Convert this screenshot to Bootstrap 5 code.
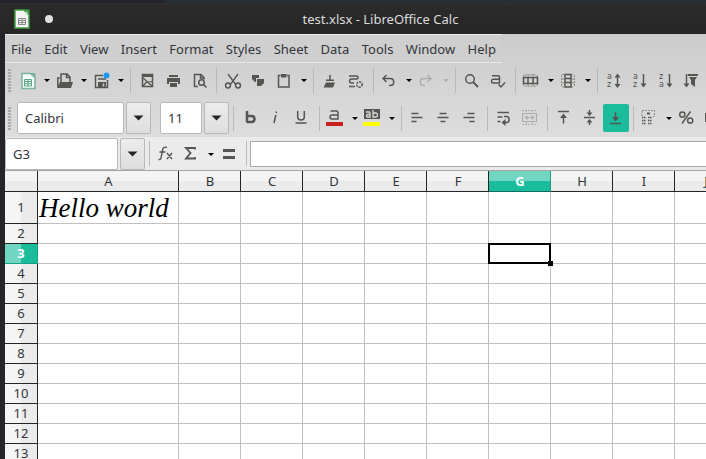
<!DOCTYPE html>
<html lang="en">
<head>
<meta charset="utf-8">
<meta name="viewport" content="width=device-width, initial-scale=1">
<title>test.xlsx - LibreOffice Calc</title>
<link href="https://cdn.jsdelivr.net/npm/bootstrap@5.3.0/dist/css/bootstrap.min.css" rel="stylesheet">
<style>
  body { background: #202228; color: #31363b; font: 13px/20px "Noto Sans", sans-serif; }
  button { color: inherit; }
  .app-shell { background: #242529; padding-left: 5px; }
  .desk-edge { height: 3px; margin-left: -5px; background: linear-gradient(90deg, #20232a 0 165px, #272c37 165px); }
  .title-strip { height: 31px; margin-left: -5px; padding-left: 14px; background: linear-gradient(#303030 0 1px, #2b2b2b 1px, #262626); color: #dcdcdc; border-top-left-radius: 4px; }
  .unsaved-dot { width: 8px; height: 8px; margin-left: 15px; background: #e0e0e0; }
  .side-left { width: 120px; }
  .side-right { width: 79px; }
  .bars { background: linear-gradient(#cbcbcb, #dddddd); }
  .menu-strip { width: 497px; height: 29px; padding: 4px 6px 0; border-top: 1px solid #eee; border-bottom: 1px solid #e8e8e8; background: #cfcfcf; }
  .menu-strip a { color: #31363b; text-decoration: none; }
  .standard-row { height: 34px; }
  .format-row { height: 40px; padding-top: 2px; }
  .grip { width: 3px; height: 23px; margin: 0 4px 0 3px; flex: none; background: repeating-linear-gradient(#a9a9a9 0 2px, transparent 2px 3px); }
  .tool, .drop { padding: 0; border: 0; background: none; display: flex; color: #555652; }
  .tool { width: 26px; flex: none; }
  .drop { width: 11px; flex: none; color: #000; }
  .tool svg, .drop svg { display: block; stroke: currentColor; fill: none; stroke-width: 1.5; }
  .drop svg { stroke: none; fill: currentColor; }
  .tool svg .solid { fill: currentColor; stroke: none; }
  .tool svg text { fill: currentColor; stroke: none; font-family: "DejaVu Sans", sans-serif; }
  .dim { color: #aeaeae; }
  .pressed { height: 28px; align-items: center; border-radius: 2px; background: #1abc9c; }
  .rule { width: 1px; height: 25px; margin: 0 3px 0 4px; background: #b9b9b9; flex: none; }
  .field { height: 32px; border: 1px solid #b8b8b8; border-radius: 2px; background: #fff; color: #31363b; padding: 0 7px; flex: none; }
  .arrow-box { width: 25px; height: 32px; margin-left: 2px; padding: 0; border: 1px solid #b8b8b8; border-radius: 2px; background: linear-gradient(#ececec, #dedede); display: flex; align-items: center; justify-content: center; flex: none; }
  .font-field { width: 107px; margin-left: 2px; }
  .size-field { width: 42px; margin-left: 9px; }
  .name-field { width: 113px; }
  .line-field { height: 26px; border: 1px solid #a9a9a9; border-right: 0; background: #fff; min-width: 0; }
  .formula-row { height: 34px; background: #ebebeb; border-bottom: 1px solid #a5a5a5; }
  .sheet { background: #fff; }
  .grid { table-layout: fixed; width: 732px; border-collapse: separate; border-spacing: 0; background: #fff; }
  .grid td, .grid th { height: 20px; padding: 0; line-height: 19px; border: solid #c0c0c0; border-width: 0 1px 1px 0; white-space: nowrap; }
  .grid th { font-weight: 400; text-align: center; border-color: #232629; color: #31363b; }
  .grid thead th { height: 21px; padding-left: 1px; background: linear-gradient(#f4f4f4 50%, #ebebeb 50%); line-height: 20px; }
  .grid tbody th { background: linear-gradient(90deg, #f5f5f5 50%, #ebebeb 50%); }
  .grid .first-row > * { height: 32px; }
  .grid thead th.active { background: linear-gradient(#70d5c1 50%, #1abc9c 50%); }
  .grid tbody th.active { background: linear-gradient(90deg, #70d5c1 50%, #1abc9c 50%); }
  .grid th.active { color: #fff; font-weight: 700; border-right-color: #16a085; border-bottom-color: #16a085; }
  .grid thead th.active { border-bottom-color: #0e6f5c; }
  .grid td.hello { padding-left: 1px; font: italic 27px/30px "Liberation Serif", serif; color: #000; }
  .pick { position: relative; }
  .pick::before { content: ""; position: absolute; inset: -1px; border: 2px solid #000; }
  .pick::after { content: ""; position: absolute; right: -3px; bottom: -3px; width: 5px; height: 5px; background: #000; }
</style>
<script src="https://cdn.jsdelivr.net/npm/bootstrap@5.3.0/dist/js/bootstrap.bundle.min.js"></script>
</head>
<body class="overflow-hidden">
<svg class="d-none" aria-hidden="true">
  <symbol id="caret" viewBox="0 0 11 26"><path d="M3 12h6l-3 3z"/></symbol>
  <symbol id="wide-caret" viewBox="0 0 11 6"><path d="M0.500 0.500h10L5.500 5.500z" fill="#232629"/></symbol>
</svg>
<div class="app-shell vh-100 d-flex flex-column overflow-hidden">
  <div class="desk-edge flex-shrink-0"></div>
  <header class="title-strip d-flex align-items-center flex-shrink-0">
    <div class="side-left d-flex align-items-center">
      <svg width="16" height="20" viewBox="0 0 16 20"><path d="M1 1h9l5 5v13H1z" fill="#f4f4f4" stroke="#43a047" stroke-width="1.500"/><path d="M9 .5h6.500V7z" fill="#43a047"/><path d="M10.500 3l3 3V3z" fill="#b9e0ba"/><path d="M4.500 9.500h7v6h-7zM4.500 11.500h7M4.500 13.500h7M8 9.500v6" fill="none" stroke="#8a8a8a"/></svg>
      <span class="unsaved-dot rounded-circle"></span>
    </div>
    <div class="flex-grow-1 text-center">test.xlsx - LibreOffice Calc</div>
    <div class="side-right"></div>
  </header>

  <div class="bars flex-shrink-0">
    <nav class="menu-strip d-flex justify-content-between">
      <a href="#">File</a><a href="#">Edit</a><a href="#">View</a><a href="#">Insert</a><a href="#">Format</a><a href="#">Styles</a><a href="#">Sheet</a><a href="#">Data</a><a href="#">Tools</a><a href="#">Window</a><a href="#">Help</a>
    </nav>

    <div class="standard-row d-flex align-items-center overflow-hidden" role="toolbar" aria-label="Standard">
      <span class="grip"></span>
      <button class="tool" aria-label="New"><svg width="26" height="26"><path d="M7 6.500h9l4 4v11H7z" fill="#f4fbf8" stroke="#7ab49c"/><path class="solid" style="color:#7ab49c" d="M14 6h6.500v6z"/><path d="M9.500 12.500h7v6.500h-7zM9.500 14.500h7M9.500 16.700h7M13 12.500v6.500" stroke="#5da487" stroke-width="1"/></svg></button>
      <button class="drop" aria-label="New options"><svg width="11" height="26"><use href="#caret"/></svg></button>
      <button class="tool" aria-label="Open"><svg width="26" height="26"><path d="M5.800 20V11h2M9 16V7h6l3 3v5M14.500 7v3.500H18"/><path class="solid" d="M8 15h13l-2 6H5z"/></svg></button>
      <button class="drop" aria-label="Open options"><svg width="11" height="26"><use href="#caret"/></svg></button>
      <button class="tool" aria-label="Save"><svg width="26" height="26"><path d="M14 8.500H6.500v12h12V13M9 12h8"/><path class="solid" d="M9 15h8v6H9z"/><path d="M14.500 16.500v3" stroke="#d2d2d2"/><circle cx="17.500" cy="8.500" r="3" fill="#1d99f3" stroke="none"/></svg></button>
      <button class="drop" aria-label="Save options"><svg width="11" height="26"><use href="#caret"/></svg></button>
      <span class="rule"></span>
      <button class="tool" aria-label="Export as PDF"><svg width="26" height="26"><path d="M8.500 7.500h10v12h-10z"/><path d="M8 9h11" stroke-width="2"/><path d="M9 11l9 8M9 19l3-3.500 6-1" stroke-width="1.200"/></svg></button>
      <button class="tool" aria-label="Print"><svg width="26" height="26"><path class="solid" d="M9 8h9v2H9zM7 11h13v6h-2v-2H9v2H7zM10 16h7v4h-7z"/></svg></button>
      <button class="tool" aria-label="Print preview"><svg width="26" height="26"><path d="M12 19.500H8.500v-12H15l3 3v2M14.500 7.500V11H18"/><circle cx="15.500" cy="15.500" r="2.800"/><path d="M17.500 17.500l3 3"/></svg></button>
      <span class="rule"></span>
      <button class="tool" aria-label="Cut"><svg width="26" height="26"><path d="M8 7l8 11M18 7l-8 11" stroke-width="1.300"/><circle cx="8" cy="18.500" r="2.400"/><circle cx="18" cy="18.500" r="2.400"/></svg></button>
      <button class="tool" aria-label="Copy"><svg width="26" height="26"><path class="solid" d="M6 8h7v3h-3v4H9L6 12zM11 12h7v4l-3 3h-4z"/></svg></button>
      <button class="tool" aria-label="Paste"><svg width="26" height="26"><path d="M8.500 8.500h-2v11.500h10.500v-11.500h-2"/><path class="solid" d="M9 7h5.500v3.500H9z"/></svg></button>
      <button class="drop" aria-label="Paste options"><svg width="11" height="26"><use href="#caret"/></svg></button>
      <span class="rule"></span>
      <button class="tool" aria-label="Clone formatting"><svg width="26" height="26"><path d="M13 8v5"/><path class="solid" d="M9 12.500h8V14H9zM9 15.500h9l-2 5H6.500z"/></svg></button>
      <button class="tool" aria-label="Clear formatting"><svg width="26" height="26"><path d="M6 9h7.500c2 0 2 3 0 3H8.500c-2.500 0-2.500 4 0 4H11M6 19.500h6"/><circle cx="16.500" cy="17.500" r="2.700" stroke-dasharray="2 1"/></svg></button>
      <span class="rule"></span>
      <button class="tool" aria-label="Undo"><svg width="26" height="26"><path d="M9.500 8L6 11.500 9.500 15M6 11.500h7c5 0 5 7 0 7h-1"/></svg></button>
      <button class="drop" aria-label="Undo options"><svg width="11" height="26"><use href="#caret"/></svg></button>
      <button class="tool dim" aria-label="Redo"><svg width="26" height="26"><path d="M13.500 8l3.500 3.500-3.500 3.500M17 11.500h-7c-5 0-5 7 0 7h1"/></svg></button>
      <button class="drop dim" aria-label="Redo options"><svg width="11" height="26"><use href="#caret"/></svg></button>
      <span class="rule"></span>
      <button class="tool" aria-label="Find and replace"><svg width="26" height="26"><circle cx="11" cy="12" r="4.300"/><path d="M14 15l5 5" stroke-width="1.800"/></svg></button>
      <button class="tool" aria-label="Spelling"><svg width="26" height="26"><path d="M7 8.700h6q1.500 0 1.500 1.500V16H8q-1.500 0-1.500-1.800T8 12.300h6.500M13.500 17.500l2.500 2.500 4-4.500"/></svg></button>
      <span class="rule"></span>
      <button class="tool" aria-label="Row"><svg width="26" height="26"><path d="M5.500 7.800h12M5.500 19.200h12M9 7v2.500M14 7v2.500M9 17v2.500M14 17v2.500M4.700 8v11M18.300 8v11" stroke="#8d8d8a" stroke-width="1" stroke-dasharray="2 1"/><path d="M4.500 10.500h14v6h-14zM9 10.500v6M14 10.500v6"/></svg></button>
      <button class="drop" aria-label="Row options"><svg width="11" height="26"><use href="#caret"/></svg></button>
      <button class="tool" aria-label="Column"><svg width="26" height="26"><path d="M5.500 8v11.500M18.500 8v11.500M6 7.500h3M15 7.500h3M6 19.800h3M15 19.800h3M6 12h2M6 16h2M16 12h2M16 16h2" stroke="#8d8d8a" stroke-width="1" stroke-dasharray="2 1"/><path d="M9 7.500h6v12.500H9zM9 11.500h6M9 15.500h6"/></svg></button>
      <button class="drop" aria-label="Column options"><svg width="11" height="26"><use href="#caret"/></svg></button>
      <span class="rule"></span>
      <button class="tool" aria-label="Sort"><svg width="26" height="26"><text x="6" y="12" font-size="8">a</text><text x="6" y="20" font-size="8">z</text><path d="M16.500 8v11"/><path class="solid" d="M13.500 10.500l3-4 3 4zM13.500 17l3 4 3-4z"/></svg></button>
      <button class="tool" aria-label="Sort ascending"><svg width="26" height="26"><text x="6" y="12" font-size="8">a</text><text x="6" y="20" font-size="8">z</text><path d="M16.500 7v12"/><path class="solid" d="M13.500 16.500l3 4 3-4z"/></svg></button>
      <button class="tool" aria-label="Sort descending"><svg width="26" height="26"><text x="6" y="12" font-size="8">z</text><text x="6" y="20" font-size="8">a</text><path d="M16.500 7v12"/><path class="solid" d="M13.500 16.500l3 4 3-4z"/></svg></button>
      <button class="tool" aria-label="AutoFilter"><svg width="26" height="26"><path d="M7.500 7v12"/><path class="solid" d="M4.500 16.500l3 4 3-4zM9 7h10v2H9zM10 10h8l-2 3v7l-4-3v-4z"/></svg></button>
    </div>

    <div class="format-row d-flex align-items-center overflow-hidden" role="toolbar" aria-label="Formatting">
      <span class="grip"></span>
      <input class="field font-field" aria-label="Font name" value="Calibri">
      <button class="arrow-box" aria-label="Choose font"><svg width="11" height="6"><use href="#wide-caret"/></svg></button>
      <input class="field size-field" aria-label="Font size" value="11">
      <button class="arrow-box" aria-label="Choose size"><svg width="11" height="6"><use href="#wide-caret"/></svg></button>
      <span class="rule"></span>
      <button class="tool" aria-label="Bold"><svg width="26" height="26"><path d="M10 6v11.500M10 11h4.500q3 0 3 3t-3 3H10" stroke-width="2.500"/></svg></button>
      <button class="tool" aria-label="Italic"><svg width="26" height="26"><path d="M13.500 6.500l-.3 1.500M12.800 10l-1.800 8"/></svg></button>
      <button class="tool" aria-label="Underline"><svg width="26" height="26"><path d="M8.700 6v6q0 3 3.300 3t3.300-3V6M6.500 18h11"/></svg></button>
      <span class="rule"></span>
      <button class="tool" aria-label="Font color"><svg width="26" height="26"><path d="M7.500 6h5.500q2 0 2 2v6H9q-2 0-2-2t2-2h6"/><path d="M3 17h17v4H3z" fill="#c9211e" stroke="none"/></svg></button>
      <button class="drop" aria-label="Font color options"><svg width="11" height="26"><use href="#caret"/></svg></button>
      <button class="tool" aria-label="Highlighting color"><svg width="26" height="26"><path class="solid" d="M4 4h16v10H4z"/><path d="M6 7h3q1 0 1 1v4H7.500q-1 0-1-1t1-1.500H10M13 5v7h3q1.500 0 1.500-2T16 8h-3" stroke="#dadada" stroke-width="1.300"/><path d="M3 17h17v4H3z" fill="#ffff00" stroke="none"/></svg></button>
      <button class="drop" aria-label="Highlighting options"><svg width="11" height="26"><use href="#caret"/></svg></button>
      <span class="rule"></span>
      <button class="tool" aria-label="Align left"><svg width="26" height="26"><path d="M6.500 8.500h7M6.500 12.500h11M6.500 16.500h5"/></svg></button>
      <button class="tool" aria-label="Align center"><svg width="26" height="26"><path d="M8.500 8.500h7M6.500 12.500h11M9.500 16.500h5"/></svg></button>
      <button class="tool" aria-label="Align right"><svg width="26" height="26"><path d="M10.500 8.500h7M6.500 12.500h11M12.500 16.500h5"/></svg></button>
      <span class="rule"></span>
      <button class="tool" aria-label="Wrap text"><svg width="26" height="26"><path d="M6.500 7.500h11.500M6.500 12h5M6.500 16.500h3M13 11.500h2.500c3.500 0 3.500 6 0 6H13"/><path class="solid" d="M14.500 14l-4 3.500 4 3.500z"/></svg></button>
      <button class="tool dim" aria-label="Merge cells"><svg width="26" height="26"><path d="M5.500 8.500h14v8h-14zM8.500 12.500h8M10.500 10.500l-2 2 2 2M14.500 10.500l2 2-2 2" stroke-width="1.200"/><path d="M5 5.500h15M5 19.500h15M9.500 5v3M15.500 5v3M9.500 17v3M15.500 17v3" stroke-width="1" stroke-dasharray="2 1"/></svg></button>
      <span class="rule"></span>
      <button class="tool" aria-label="Align top"><svg width="26" height="26"><path d="M7 6.500h11M12.500 11v7.500"/><path class="solid" d="M9 13l3.500-4.500L16 13z"/></svg></button>
      <button class="tool" aria-label="Center vertically"><svg width="26" height="26"><path d="M7 12.500h11M12.500 5v3M12.500 17v3"/><path class="solid" d="M9.500 7.500h6l-3 3.500zM9.500 17.500h6l-3-3.500z"/></svg></button>
      <button class="tool pressed" aria-label="Align bottom" aria-pressed="true"><svg width="26" height="26"><path d="M7 18.500h11M12.500 7v6"/><path class="solid" d="M9 12l3.500 4.500L16 12z"/></svg></button>
      <span class="rule"></span>
      <button class="tool" aria-label="Conditional formatting"><svg width="26" height="26"><path d="M5 5.500h12.500v6H15M5 6v5" stroke="#8d8d8a" stroke-width="1" stroke-dasharray="2 1"/><path class="solid" d="M10 7.500h3v2h-3z"/><path d="M5 12.500h4M11 12.500h4M5 15.500h4M11 15.500h4M5 18.500h4M11 18.500h4" stroke-width="1.300" stroke-dasharray="1.500 .5"/></svg></button>
      <button class="drop" aria-label="Conditional options"><svg width="11" height="26"><use href="#caret"/></svg></button>
      <button class="tool" aria-label="Format as percent"><svg width="26" height="26"><circle cx="8.300" cy="9.500" r="2.600"/><circle cx="16.200" cy="15.500" r="2.600"/><path d="M16.500 6.500l-8.500 12"/></svg></button>
      <button class="tool" aria-label="Format as number"><svg width="26" height="26"><path class="solid" d="M5 8h14v9H5z"/></svg></button>
    </div>
  </div>

  <div class="formula-row d-flex align-items-center flex-shrink-0">
    <input class="field name-field" aria-label="Name box" value="G3">
    <button class="arrow-box" aria-label="Choose range"><svg width="11" height="6"><use href="#wide-caret"/></svg></button>
    <span class="rule"></span>
    <button class="tool" aria-label="Function wizard"><svg width="26" height="26"><path d="M14 6.500q-4-1.500-4.500 3L8 17q-.5 2-2.500 1.500M6.500 11h6M14 12l5 6M19 12l-5 6" stroke-width="1.400"/></svg></button>
    <button class="tool" aria-label="Select function"><svg width="26" height="26"><path d="M16 8.500V7H7l4.500 5L7 17.500h9V16" stroke-width="1.800"/></svg></button>
    <button class="drop" aria-label="Function options"><svg width="11" height="26"><use href="#caret"/></svg></button>
    <button class="tool" aria-label="Formula"><svg width="26" height="26"><path class="solid" d="M7 8h12v3H7zM7 15h12v3H7z"/></svg></button>
    <span class="rule"></span>
    <input class="line-field flex-grow-1" aria-label="Input line">
  </div>

  <main class="sheet flex-grow-1 overflow-hidden">
    <table class="grid">
      <colgroup><col style="width:33px"><col style="width:141px"><col span="9" style="width:62px"></colgroup>
      <thead><tr><th></th><th scope="col">A</th><th scope="col">B</th><th scope="col">C</th><th scope="col">D</th><th scope="col">E</th><th scope="col">F</th><th scope="col" class="active">G</th><th scope="col">H</th><th scope="col">I</th><th scope="col">J</th></tr></thead>
      <tbody>
        <tr class="first-row"><th scope="row">1</th><td class="hello">Hello world</td><td></td><td></td><td></td><td></td><td></td><td></td><td></td><td></td><td></td></tr>
        <tr><th scope="row">2</th><td></td><td></td><td></td><td></td><td></td><td></td><td></td><td></td><td></td><td></td></tr>
        <tr><th scope="row" class="active">3</th><td></td><td></td><td></td><td></td><td></td><td></td><td class="pick"></td><td></td><td></td><td></td></tr>
        <tr><th scope="row">4</th><td></td><td></td><td></td><td></td><td></td><td></td><td></td><td></td><td></td><td></td></tr>
        <tr><th scope="row">5</th><td></td><td></td><td></td><td></td><td></td><td></td><td></td><td></td><td></td><td></td></tr>
        <tr><th scope="row">6</th><td></td><td></td><td></td><td></td><td></td><td></td><td></td><td></td><td></td><td></td></tr>
        <tr><th scope="row">7</th><td></td><td></td><td></td><td></td><td></td><td></td><td></td><td></td><td></td><td></td></tr>
        <tr><th scope="row">8</th><td></td><td></td><td></td><td></td><td></td><td></td><td></td><td></td><td></td><td></td></tr>
        <tr><th scope="row">9</th><td></td><td></td><td></td><td></td><td></td><td></td><td></td><td></td><td></td><td></td></tr>
        <tr><th scope="row">10</th><td></td><td></td><td></td><td></td><td></td><td></td><td></td><td></td><td></td><td></td></tr>
        <tr><th scope="row">11</th><td></td><td></td><td></td><td></td><td></td><td></td><td></td><td></td><td></td><td></td></tr>
        <tr><th scope="row">12</th><td></td><td></td><td></td><td></td><td></td><td></td><td></td><td></td><td></td><td></td></tr>
        <tr><th scope="row">13</th><td></td><td></td><td></td><td></td><td></td><td></td><td></td><td></td><td></td><td></td></tr>
      </tbody>
    </table>
  </main>
</div>
</body>
</html>
